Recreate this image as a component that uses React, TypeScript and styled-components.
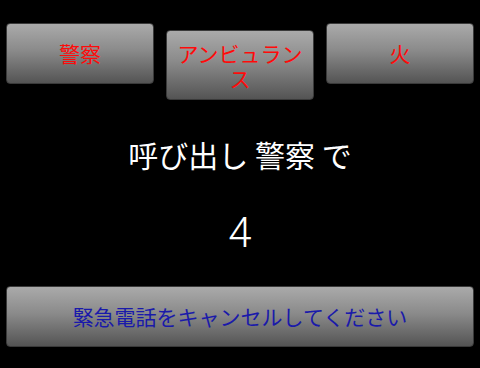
import React from "react";
import styled, { createGlobalStyle } from "styled-components";

const Global = createGlobalStyle`
  html, body {
    margin: 0;
    padding: 0;
    background: #000;
  }
  body {
    font-family: "Roboto", "Noto Sans CJK JP", sans-serif;
  }
`;

const Screen = styled.div`
  width: 480px;
  height: 368px;
  background: #000;
  display: flex;
  flex-direction: column;
  box-sizing: border-box;
  padding: 23px 6px 21px;
`;

const TopRow = styled.div`
  display: flex;
  align-items: baseline;
  gap: 12px;
`;

const Button = styled.button<{ $tall?: boolean; $tone: "red" | "blue" }>`
  flex: 1 1 0;
  min-width: 0;
  box-sizing: border-box;
  margin: 0;
  border: 1px solid #3a3a3a;
  border-radius: 4px;
  background: linear-gradient(to bottom, #aaaaaa 0%, #8a8a8a 45%, #545454 100%);
  font-family: "Noto Sans CJK JP", sans-serif;
  font-size: 21px;
  line-height: 25px;
  color: ${(p) => (p.$tone === "red" ? "#ff0a0a" : "#1a1aaa")};
  padding: ${(p) => (p.$tall ? "10px 4px 8px" : "17px 4px 17px")};
  text-align: center;
  cursor: pointer;
`;

const WideButton = styled(Button)`
  flex: none;
  width: 100%;
  margin-top: auto;
`;

const Title = styled.div`
  margin-top: 34px;
  text-align: center;
  color: #fff;
  font-family: "Noto Sans CJK JP", sans-serif;
  font-size: 30px;
  line-height: 40px;
`;

const Count = styled.div`
  margin-top: 34px;
  text-align: center;
  color: #fff;
  font-family: "Roboto", "Noto Sans CJK JP", sans-serif;
  font-weight: 300;
  font-size: 42px;
  line-height: 50px;
`;

export default function App() {
  return (
    <>
      <Global />
      <Screen>
        <TopRow>
          <Button $tone="red">警察</Button>
          <Button $tone="red" $tall>
            アンビュランス
          </Button>
          <Button $tone="red">火</Button>
        </TopRow>
        <Title>呼び出し 警察 で</Title>
        <Count>4</Count>
        <WideButton $tone="blue">緊急電話をキャンセルしてください</WideButton>
      </Screen>
    </>
  );
}
